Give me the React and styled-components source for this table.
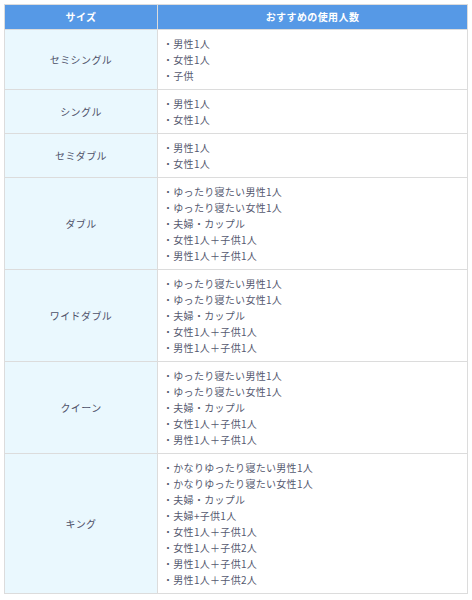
import styled, { createGlobalStyle } from "styled-components"

const GlobalStyle = createGlobalStyle`
    body {
        margin: 0;
        padding: 4px;
        background: #ffffff;
        font-family: "Noto Sans CJK JP", "Noto Sans", sans-serif;
    }
`

const Table = styled.table`
    width: 100%;
    border-collapse: collapse;
    border: 1px solid #dcdcdc;
    table-layout: fixed;
`
const HeadCell = styled.th`
    box-sizing: border-box;
    background-color: #5699e6;
    color: #ffffff;
    font-size: 10px;
    font-weight: bold;
    line-height: 16px;
    padding: 4px 6px;
    border: 1px solid #dcdcdc;
    border-left: ${p => p.$first ? "1px solid #dcdcdc" : "1px solid #8fbcef"};
    width: ${p => p.$width || "auto"};
    letter-spacing: 0.4px;
`
const SizeCell = styled.td`
    background-color: #eaf8fe;
    color: #4d5068;
    font-size: 10px;
    line-height: 16px;
    text-align: center;
    vertical-align: middle;
    padding: 6px 6px 5px;
    border: 1px solid #dcdcdc;
    letter-spacing: 0.4px;
`
const PeopleCell = styled.td`
    background-color: #ffffff;
    padding: 6px 6px 5px 5px;
    border: 1px solid #dcdcdc;
    vertical-align: middle;
`
const PeopleList = styled.ul`
    list-style: none;
    margin: 0;
    padding: 0;
`
const PeopleItem = styled.li`
    color: #55596f;
    font-size: 10px;
    line-height: 16px;
    letter-spacing: 0.3px;
    &::before {
        content: "・";
    }
`

const rows = [
    { size: "セミシングル", people: ["男性1人", "女性1人", "子供"] },
    { size: "シングル", people: ["男性1人", "女性1人"] },
    { size: "セミダブル", people: ["男性1人", "女性1人"] },
    { size: "ダブル", people: ["ゆったり寝たい男性1人", "ゆったり寝たい女性1人", "夫婦・カップル", "女性1人＋子供1人", "男性1人＋子供1人"] },
    { size: "ワイドダブル", people: ["ゆったり寝たい男性1人", "ゆったり寝たい女性1人", "夫婦・カップル", "女性1人＋子供1人", "男性1人＋子供1人"] },
    { size: "クイーン", people: ["ゆったり寝たい男性1人", "ゆったり寝たい女性1人", "夫婦・カップル", "女性1人＋子供1人", "男性1人＋子供1人"] },
    { size: "キング", people: ["かなりゆったり寝たい男性1人", "かなりゆったり寝たい女性1人", "夫婦・カップル", "夫婦+子供1人", "女性1人＋子供1人", "女性1人＋子供2人", "男性1人＋子供1人", "男性1人＋子供2人"] },
]

export default function App() {
    return <>
        <GlobalStyle/>
        <Table>
            <thead>
                <tr>
                    <HeadCell $first $width="153px">サイズ</HeadCell>
                    <HeadCell>おすすめの使用人数</HeadCell>
                </tr>
            </thead>
            <tbody>
                {rows.map(r => (
                    <tr key={r.size}>
                        <SizeCell>{r.size}</SizeCell>
                        <PeopleCell>
                            <PeopleList>
                                {r.people.map((p, i) => <PeopleItem key={i}>{p}</PeopleItem>)}
                            </PeopleList>
                        </PeopleCell>
                    </tr>
                ))}
            </tbody>
        </Table>
    </>
}
